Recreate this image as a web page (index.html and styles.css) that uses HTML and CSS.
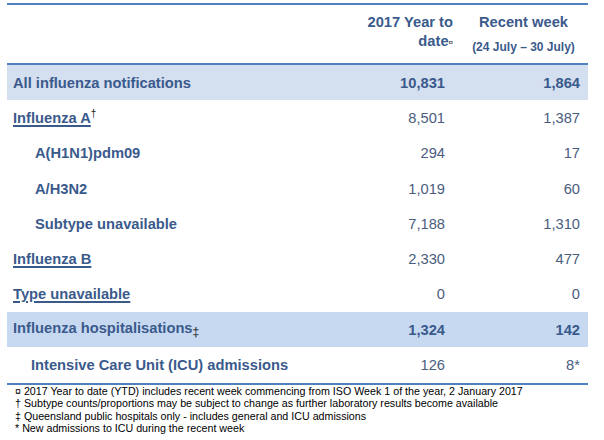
FILE: index.html
```html
<!DOCTYPE html>
<html>
<head>
<meta charset="utf-8">
<link rel="stylesheet" href="styles.css">
</head>
<body>
<div class="wrap">
  <div class="table">
    <div class="head">
      <div class="label"></div>
      <div class="c1 hc1">2017 Year to<br>date<span class="cur">¤</span></div>
      <div class="c2 hc2">Recent week<div class="sub">(24 July – 30 July)</div></div>
    </div>
    <div class="row band1 strong">
      <div class="label">All influenza notifications</div>
      <div class="c1">10,831</div>
      <div class="c2">1,864</div>
    </div>
    <div class="row">
      <div class="label"><span class="u">Influenza A</span><sup class="mark">†</sup></div>
      <div class="c1">8,501</div>
      <div class="c2">1,387</div>
    </div>
    <div class="row">
      <div class="label ind">A(H1N1)pdm09</div>
      <div class="c1">294</div>
      <div class="c2">17</div>
    </div>
    <div class="row">
      <div class="label ind">A/H3N2</div>
      <div class="c1">1,019</div>
      <div class="c2">60</div>
    </div>
    <div class="row">
      <div class="label ind">Subtype unavailable</div>
      <div class="c1">7,188</div>
      <div class="c2">1,310</div>
    </div>
    <div class="row">
      <div class="label"><span class="u">Influenza B</span></div>
      <div class="c1">2,330</div>
      <div class="c2">477</div>
    </div>
    <div class="row">
      <div class="label"><span class="u">Type unavailable</span></div>
      <div class="c1">0</div>
      <div class="c2">0</div>
    </div>
    <div class="row band2 strong">
      <div class="label">Influenza hospitalisations<span class="low">‡</span></div>
      <div class="c1">1,324</div>
      <div class="c2">142</div>
    </div>
    <div class="row">
      <div class="label ind2">Intensive Care Unit (ICU) admissions</div>
      <div class="c1">126</div>
      <div class="c2">8*</div>
    </div>
  </div>
  <div class="notes">
    <div>¤ 2017 Year to date (YTD) includes recent week commencing from ISO Week 1 of the year, 2 January 2017</div>
    <div>† Subtype counts/proportions may be subject to change as further laboratory results become available</div>
    <div>‡ Queensland public hospitals only - includes general and ICU admissions</div>
    <div>* New admissions to ICU during the recent week</div>
  </div>
</div>
</body>
</html>
```
FILE: styles.css
```css
html, body {
  margin: 0;
  padding: 0;
  background: #ffffff;
}
body {
  font-family: "Liberation Sans", Arial, sans-serif;
  width: 604px;
  height: 440px;
  overflow: hidden;
}
.wrap {
  padding: 3px 0 0 7px;
}
.table {
  width: 581px;
  border-top: 2px solid #4f81bd;
  border-bottom: 2px solid #4f81bd;
}
.head {
  display: flex;
  height: 58px;
  border-bottom: 2px solid #4f81bd;
  font-weight: bold;
  font-size: 14.7px;
  line-height: 19px;
  color: #3a5a8c;
}
.hc1 {
  padding-top: 8px;
}
.hc2 {
  padding-top: 8px;
  text-align: center !important;
  padding-right: 0 !important;
}
.sub {
  font-size: 12px;
  line-height: 16px;
  margin-top: 7px;
}
.cur {
  font-size: 8px;
  color: #222;
  font-weight: normal;
  vertical-align: 1px;
}
.row {
  display: flex;
  align-items: center;
  height: 35.3px;
  font-size: 14.7px;
  color: #4a5d7e;
}
.label {
  flex: 1;
  padding-left: 6px;
  font-weight: bold;
  color: #3a5a8c;
  white-space: nowrap;
}
.ind {
  padding-left: 28px;
}
.ind2 {
  padding-left: 24px;
}
.c1 {
  width: 114px;
  padding-right: 6px;
  text-align: right;
}
.c2 {
  width: 129px;
  padding-right: 8px;
  text-align: right;
}
.strong .c1, .strong .c2 {
  font-weight: bold;
  color: #3a5a8c;
}
.band1 {
  background: #d4dfef;
}
.band2 {
  background: #c6d9f1;
}
.u {
  text-decoration: underline;
  text-decoration-thickness: 1.6px;
  text-underline-offset: 2px;
}
.mark {
  font-size: 10px;
  font-weight: normal;
  color: #1a1a1a;
  vertical-align: 6px;
  line-height: 0;
}
.low {
  font-size: 12px;
  font-weight: normal;
  color: #1a1a1a;
  vertical-align: -3px;
}
.notes {
  padding-left: 8px;
  font-size: 10.7px;
  line-height: 12.5px;
  color: #000;
  white-space: nowrap;
}
```
